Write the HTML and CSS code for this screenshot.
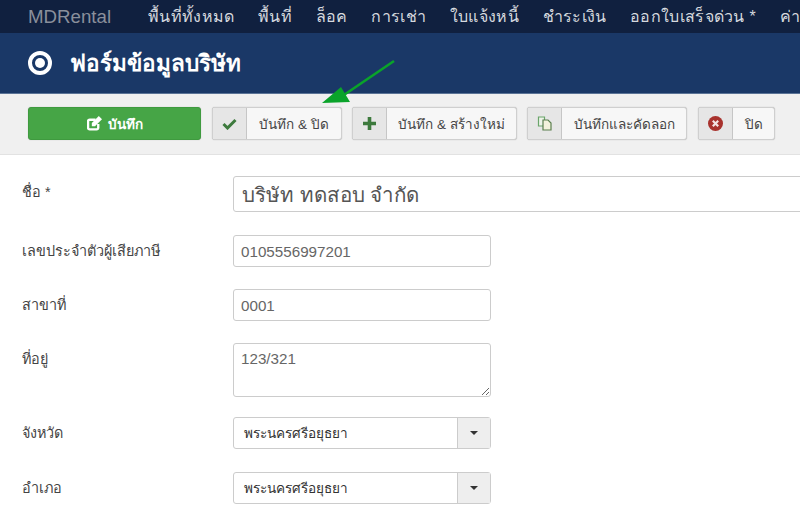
FILE: index.html
```html
<!DOCTYPE html>
<html lang="en">
<head>
  <meta charset="UTF-8" />
  <title>MDRental</title>
  <link rel="stylesheet" href="styles.css">
</head>
<body>
  <!-- Top menu -->
  <nav class="navbar">
    <a class="brand" href="#">MDRental</a>
    <ul class="nav-list">
      <li>พื้นที่ทั้งหมด</li>
      <li>พื้นที่</li>
      <li>ล็อค</li>
      <li>การเช่า</li>
      <li>ใบแจ้งหนี้</li>
      <li>ชำระเงิน</li>
      <li>ออกใบเสร็จด่วน *</li>
      <li>ค่า</li>
    </ul>
  </nav>

  <header class="page-title">
    <span class="title-icon"></span>
    <h1>ฟอร์มข้อมูลบริษัท</h1>
  </header>

  <!-- Toolbar -->
  <div class="toolbar">
    <button class="btn-save">
      <svg class="save-icon" width="15" height="15" viewBox="0 0 14 14">
        <path d="M10.5 7.5V11a1.5 1.5 0 0 1-1.5 1.5H2.5A1.5 1.5 0 0 1 1 11V5a1.5 1.5 0 0 1 1.5-1.5H8" fill="none" stroke="#fff" stroke-width="2.2"/>
        <path d="M4.5 6.5L11 0l3 3-6.500 6.500h-3z" fill="#fff"/>
      </svg>
      บันทึก
    </button>
    <button class="btn btn-close-save">
      <span class="btn-icon">
        <svg width="15" height="12" viewBox="0 0 15 12"><path d="M1.500 6l4 4 8-8" fill="none" stroke="#3d7a3d" stroke-width="3"/></svg>
      </span>
      <span class="btn-text">บันทึก &amp; ปิด</span>
    </button>
    <button class="btn btn-new">
      <span class="btn-icon">
        <svg width="15" height="15" viewBox="0 0 15 15"><path d="M7.500 1v13M1 7.500h13" fill="none" stroke="#3d7a3d" stroke-width="3.6"/></svg>
      </span>
      <span class="btn-text">บันทึก &amp; สร้างใหม่</span>
    </button>
    <button class="btn btn-copy">
      <span class="btn-icon">
        <svg width="16" height="15" viewBox="0 0 16 15">
          <path d="M1.500 1h6v9h-6z" fill="#eef3ea" stroke="#6aa56a" stroke-width="1.2"/>
          <path d="M6 4h5l3 3v7H6z" fill="#f4f1dc" stroke="#5b7f4e" stroke-width="1.2"/>
        </svg>
      </span>
      <span class="btn-text">บันทึกและคัดลอก</span>
    </button>
    <button class="btn btn-cancel">
      <span class="btn-icon">
        <svg width="15" height="15" viewBox="0 0 15 15">
          <circle cx="7.500" cy="7.500" r="7.500" fill="#a8322d"/>
          <path d="M4.800 4.800l5.400 5.400M10.200 4.800l-5.400 5.400" stroke="#f3e3e2" stroke-width="2.2"/>
        </svg>
      </span>
      <span class="btn-text">ปิด</span>
    </button>
  </div>

  <!-- Green arrow drawn over the screenshot -->
  <svg class="arrow" width="90" height="56" viewBox="0 0 90 56">
    <path d="M72 2L16 40" stroke="#0aa32a" stroke-width="2.6" fill="none"/>
    <path d="M0 44L19 28 28 43z" fill="#0aa32a"/>
  </svg>

  <!-- Company form -->
  <form class="form">
    <div class="row row-name">
      <label>ชื่อ *</label>
      <input class="input-name" type="text" value="บริษัท ทดสอบ จำกัด">
    </div>
    <div class="row row-tax">
      <label>เลขประจำตัวผู้เสียภาษี</label>
      <input class="input" type="text" value="0105556997201">
    </div>
    <div class="row row-branch">
      <label>สาขาที่</label>
      <input class="input" type="text" value="0001">
    </div>
    <div class="row row-address">
      <label>ที่อยู่</label>
      <textarea class="input textarea">123/321</textarea>
    </div>
    <div class="row row-province">
      <label>จังหวัด</label>
      <div class="select">
        <span class="select-value">พระนครศรีอยุธยา</span>
        <span class="select-arrow"></span>
      </div>
    </div>
    <div class="row">
      <label>อำเภอ</label>
      <div class="select">
        <span class="select-value">พระนครศรีอยุธยา</span>
        <span class="select-arrow"></span>
      </div>
    </div>
  </form>
</body>
</html>
```

FILE: styles.css
```css
/* Reset and base styles */
* {
  box-sizing: border-box;
  margin: 0;
  padding: 0;
}

body {
  font-family: "Liberation Sans", "Noto Sans", "DejaVu Sans", sans-serif;
  background-color: #fff;
  color: #444;
  font-size: 14px;
  height: 508px;
  overflow: hidden;
  position: relative;
}

/* Top menu */
.navbar {
  background-color: #10203f;
  height: 33px;
  display: flex;
  align-items: center;
  padding-left: 28px;
  white-space: nowrap;
  overflow: hidden;
}

.brand {
  color: #8a8f9b;
  font-size: 18.7px;
  text-decoration: none;
  margin-right: 37px;
}

.nav-list {
  list-style: none;
  display: flex;
  gap: 23.7px;
  color: #d5d8de;
  font-size: 16px;
  letter-spacing: 0.3px;
}

/* Title bar */
.page-title {
  background-color: #1a3867;
  height: 61px;
  border-bottom: 1px solid #5a7396;
  display: flex;
  align-items: center;
  padding-left: 28px;
  color: #fff;
}

.title-icon {
  width: 24px;
  height: 24px;
  border: 4px solid #fff;
  border-radius: 50%;
  position: relative;
  margin-right: 18px;
}

.title-icon::after {
  content: "";
  position: absolute;
  top: 3px;
  left: 3px;
  width: 10px;
  height: 10px;
  border-radius: 50%;
  background-color: #fff;
}

.page-title h1 {
  font-size: 22.5px;
  font-weight: bold;
}

/* Toolbar */
.toolbar {
  background-color: #f0f0f0;
  height: 61px;
  border-bottom: 1px solid #e2e2e2;
  display: flex;
  align-items: flex-start;
  padding: 13px 0 0 28px;
  gap: 10px;
}

.toolbar button {
  font-family: inherit;
  font-size: 13.5px;
  height: 33px;
  border-radius: 3px;
  cursor: pointer;
  box-shadow: 0 0 1px #aaa;
}

.btn-save {
  width: 173px;
  background-color: #46a546;
  border: 1px solid #3f9a3f;
  color: #fff;
  font-weight: bold;
  display: flex;
  align-items: center;
  justify-content: center;
  gap: 6px;
}

.btn {
  display: flex;
  align-items: stretch;
  background-color: #f7f7f7;
  border: 1px solid #cfcfcf;
  color: #444;
}

.btn-icon {
  width: 34px;
  background-color: #e6e6e6;
  border-right: 1px solid #c6c6c6;
  display: flex;
  align-items: center;
  justify-content: center;
}

.btn-text {
  flex: 1;
  display: flex;
  align-items: center;
  justify-content: center;
}

.btn-close-save { width: 130px; margin-left: 1px; }
.btn-new { width: 165px; }
.btn-copy { width: 160px; }
.btn-cancel { width: 77px; margin-left: 1px; }

/* Arrow annotation */
.arrow {
  position: absolute;
  left: 322px;
  top: 59px;
}

/* Form */
.form {
  padding: 21px 0 0 22px;
}

.row {
  display: flex;
  align-items: flex-start;
}

.row label {
  width: 211px;
  flex-shrink: 0;
  font-size: 14.4px;
  padding-top: 4px;
}

.input-name {
  flex: 1;
  height: 36px;
  margin-right: -2px;
  font-family: inherit;
  font-size: 20.5px;
  color: #555;
  padding: 0 8px;
  border: 1px solid #ccc;
  border-radius: 3px 0 0 3px;
}

.input {
  width: 258px;
  height: 32px;
  font-family: inherit;
  font-size: 15.2px;
  color: #666;
  padding: 0 7px;
  border: 1px solid #ccc;
  border-radius: 3px;
}

.textarea {
  display: block;
  height: 54px;
  padding: 6px 7px;
}

.row-name { margin-bottom: 23px; }
.row-tax { margin-bottom: 22px; }
.row-branch { margin-bottom: 22px; }
.row-address { margin-bottom: 20px; }
.row-province { margin-bottom: 23px; }

/* Select with dropdown arrow */
.select {
  width: 258px;
  height: 32px;
  display: flex;
  border: 1px solid #ccc;
  border-radius: 3px;
  font-size: 13.6px;
  color: #333;
}

.select-value {
  flex: 1;
  padding-left: 10px;
  display: flex;
  align-items: center;
}

.select-arrow {
  width: 33px;
  background-color: #eee;
  border-left: 1px solid #ccc;
  position: relative;
}

.select-arrow::after {
  content: "";
  position: absolute;
  left: 12px;
  top: 13px;
  border-left: 4px solid transparent;
  border-right: 4px solid transparent;
  border-top: 4px solid #333;
}
```
